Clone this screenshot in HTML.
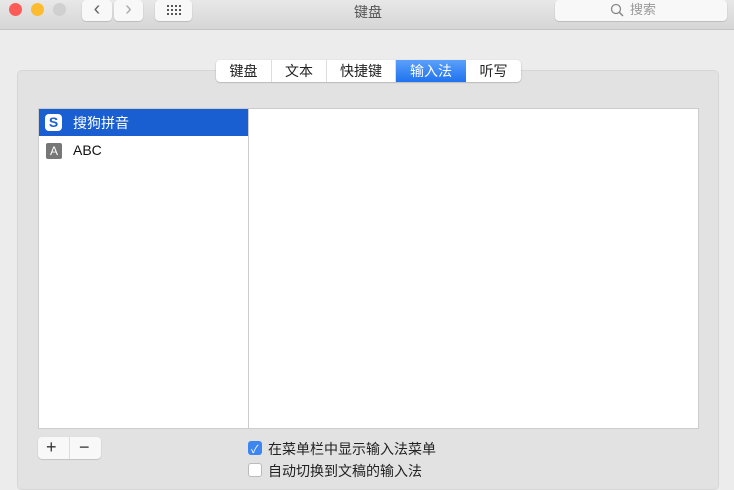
<!DOCTYPE html>
<html><head><meta charset="utf-8"><style>
*{margin:0;padding:0;box-sizing:border-box}
body{width:734px;height:478px;overflow:hidden;background:#ececec;font-family:"Liberation Sans","Noto Sans CJK SC",sans-serif;position:relative}
.tb{position:absolute;left:0;top:0;width:734px;height:30px;background:linear-gradient(#e8e8e8,#d6d6d6);border-bottom:1px solid #c4c4c4}
.dot{position:absolute;top:3px;width:13px;height:13px;border-radius:50%}
.btn{position:absolute;background:#f8f8f8;border-radius:4px;box-shadow:0 0.5px 1px rgba(0,0,0,.25);color:#888}
.panel{position:absolute;left:17px;top:70px;width:702px;height:420px;background:#e2e2e2;border-radius:5px;border:1px solid #d6d6d6}
.tabs{position:absolute;left:216px;top:60px;height:22px;display:flex;background:#fff;border-radius:4px;box-shadow:0 0.5px 1.5px rgba(0,0,0,.3);font-size:14px}
.tabs div{text-align:center;line-height:22px;border-right:1px solid #ddd;color:#222}
.tabs .on{background:linear-gradient(#5aa0fb,#1f73ef);color:#fff;border:none}
.list{position:absolute;left:38px;top:108px;width:661px;height:321px;background:#fff;border:1px solid #ccc}
.sel{position:absolute;left:0;top:0;width:209px;height:27px;background:#1a5fd1;color:#fff;font-size:14px}
.cb{position:absolute;left:248px;width:14px;height:14px;border-radius:3px}
.lab{position:absolute;left:268px;font-size:14px;color:#222}
</style></head><body>
<div class="tb">
<div class="dot" style="left:9px;background:#fc5b57"></div>
<div class="dot" style="left:31px;background:#fdbc2f"></div>
<div class="dot" style="left:53px;background:#d0d0d0"></div>
<div class="btn" style="left:82px;top:0;width:30px;height:21px;font-size:20px;line-height:18px;text-align:center;color:#666">&#8249;</div>
<div class="btn" style="left:114px;top:0;width:29px;height:21px;font-size:20px;line-height:18px;text-align:center;color:#aaa">&#8250;</div>
<div class="btn" style="left:155px;top:0;width:37px;height:21px">
<svg width="37" height="21" style="position:absolute;left:0;top:0"><g fill="#555"><rect x="12" y="5" width="2" height="2"/><rect x="16" y="5" width="2" height="2"/><rect x="20" y="5" width="2" height="2"/><rect x="24" y="5" width="2" height="2"/><rect x="12" y="9" width="2" height="2"/><rect x="16" y="9" width="2" height="2"/><rect x="20" y="9" width="2" height="2"/><rect x="24" y="9" width="2" height="2"/><rect x="12" y="13" width="2" height="2"/><rect x="16" y="13" width="2" height="2"/><rect x="20" y="13" width="2" height="2"/><rect x="24" y="13" width="2" height="2"/></g></svg></div>
<div style="position:absolute;left:354px;top:2px;font-size:14px;color:#555">键盘</div>
<div class="btn" style="left:555px;top:0;width:172px;height:21px;font-size:13px;line-height:20px;color:#999">
<svg width="14" height="14" style="position:absolute;left:55px;top:3px"><circle cx="6" cy="6" r="4.5" fill="none" stroke="#888" stroke-width="1.3"/><line x1="9.3" y1="9.3" x2="13" y2="13" stroke="#888" stroke-width="1.5"/></svg>
<span style="position:absolute;left:75px;top:0">搜索</span></div>
</div>
<div class="panel"></div>
<div class="tabs"><div style="width:56px">键盘</div><div style="width:55px">文本</div><div style="width:69px">快捷键</div><div class="on" style="width:70px">输入法</div><div style="width:55px;border:none">听写</div></div>
<div class="list">
<div style="position:absolute;left:209px;top:0;width:1px;height:319px;background:#ccc"></div>
<div class="sel"><div style="position:absolute;left:6px;top:5px;width:17px;height:17px;background:#fff;border-radius:4px;color:#1a5fd1;font-weight:bold;font-size:14px;line-height:17px;text-align:center">S</div><span style="position:absolute;left:34px;top:4px">搜狗拼音</span></div>
<div style="position:absolute;left:7px;top:34px;width:16px;height:16px;background:#777;color:#fff;border-radius:2px;font-size:12px;line-height:16px;text-align:center">A</div>
<div style="position:absolute;left:34px;top:33px;font-size:14px;color:#111">ABC</div>
</div>
<div class="btn" style="left:38px;top:437px;width:63px;height:22px;color:#333;font-size:18px;line-height:21px"><span style="position:absolute;left:8px">+</span><span style="position:absolute;left:31px;top:0;width:1px;height:22px;background:#ddd"></span><span style="position:absolute;left:41px">−</span></div>
<div class="cb" style="top:441px;background:#3d86f0"><span style="color:#fff;font-size:11px;position:absolute;left:3px;top:0">✓</span></div>
<div class="lab" style="top:439px">在菜单栏中显示输入法菜单</div>
<div class="cb" style="top:463px;background:#fff;border:1px solid #bbb"></div>
<div class="lab" style="top:461px">自动切换到文稿的输入法</div>
</body></html>
